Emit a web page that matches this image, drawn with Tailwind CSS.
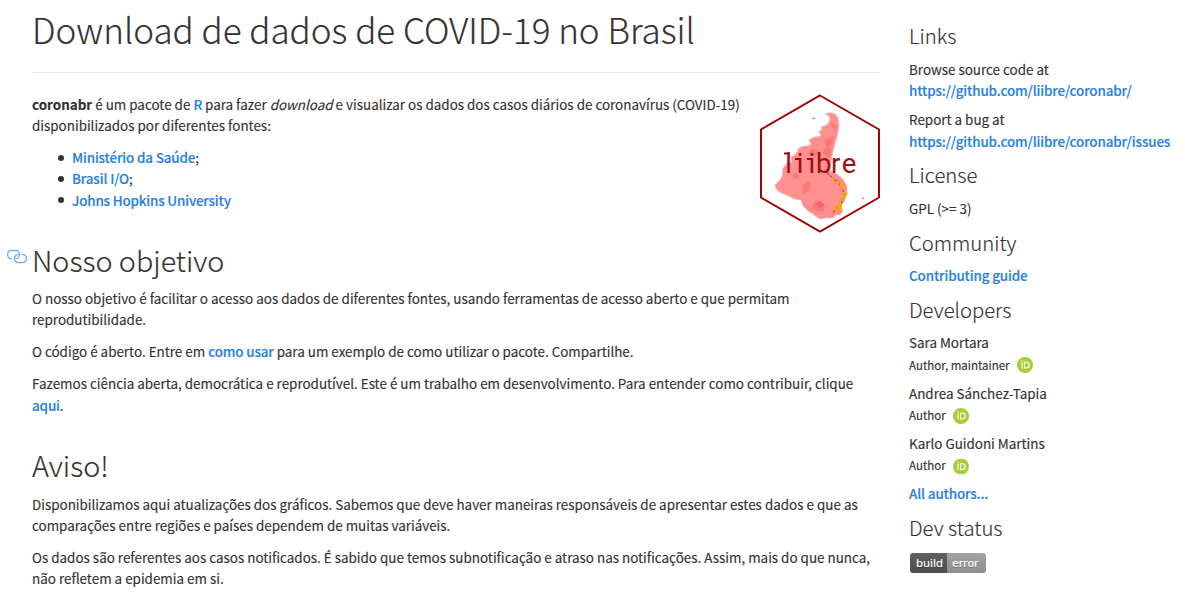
<!DOCTYPE html>
<html lang="pt-BR">
<head>
<meta charset="utf-8">
<title>coronabr</title>
<script src="https://cdn.jsdelivr.net/npm/@tailwindcss/browser@4"></script>
</head>
<body class="bg-white text-[#333] font-['Noto_Sans_CJK_SC','Noto_Sans',sans-serif] text-[13.43px] leading-[21.43px] overflow-hidden h-[603px] [-webkit-text-stroke:0.15px_currentColor]">
<div class="flex gap-[29px] pl-8">
  <main class="w-[848px] shrink-0">
    <header class="h-[73px] border-b border-[#e6e6e6] pt-[7px]">
      <h1 class="text-[35.02px] leading-[43px] font-light whitespace-nowrap">Download de dados de COVID-19 no Brasil</h1>
    </header>
    <section class="flex justify-between pt-[21px] h-[168px]">
      <div class="whitespace-nowrap">
        <p><b>coronabr</b> é um pacote de <a class="text-[#2780e3] font-medium tracking-[-0.14px]">R</a> para fazer <i>download</i> e visualizar os dados dos casos diários de coronavírus (COVID-19)<br>disponibilizados por diferentes fontes:</p>
        <ul class="mt-[10px]">
          <li class="flex items-center pl-[26px]"><span class="w-[6px] h-[6px] rounded-full bg-[#333] mr-2"></span><a class="text-[#2780e3] font-medium tracking-[-0.16px]">Ministério da Saúde</a>;</li>
          <li class="flex items-center pl-[26px]"><span class="w-[6px] h-[6px] rounded-full bg-[#333] mr-2"></span><a class="text-[#2780e3] font-medium tracking-[-0.14px]">Brasil I/O</a>;</li>
          <li class="flex items-center pl-[26px]"><span class="w-[6px] h-[6px] rounded-full bg-[#333] mr-2"></span><a class="text-[#2780e3] font-medium tracking-[-0.18px]">Johns Hopkins University</a></li>
        </ul>
      </div>
      <svg class="w-[120px] h-[139px] shrink-0" viewBox="0 0 120 139">
        <path d="M60 1.5 119 35.5V103.500L60 137.500 1 103.500V35.500Z" fill="#fff" stroke="#a10508" stroke-width="2"/>
        <path d="M65 20 70 18.500 75 20 78 24 79 33 77 43 74 53 72 63 70 77 77 80 83 85 87 92 87 99 85 106 81 112 83 117 80 121 76 121 73 124 66 124 60 125 54 121 48 117 43 112 41 106 34 105 29 102 21 99 16 95 15 91 19 87 22 83 23 74 27 69 32 68 31 63 36 60 39 54 44 52 48 52 51 50 49 46 54 43 58 43 61 41 59 37 62 36 61 33 67 31 70 26 69 22Z" fill="#ff9090" stroke="#ffb9b9" stroke-width=".7"/>
        <g fill="#f97878"><path d="M68 44 74 42 72 51 68 54 64 48ZM66 53 71 54 70 64 65 61 62 59ZM52 54 59 57 56 63 48 60ZM43 91 48 86 51 90 49 97 43 100 42 95ZM53 110 59 106 65 110 64 117 58 118 52 114ZM32 80 37 79 40 83 34 85ZM72 29 77 32 75 36 71 32ZM73 84 79 87 80 92 74 89ZM51 24 56 23.500 54 25.500ZM101 104 104 103.500 104 105.500Z"/></g>
        <path d="M55 110 60 107 64 111 60 114Z" fill="#ed666b"/>
        <path d="M69 70 68 80 73 84 79 89 84 98 83 107 78 112 73 119" fill="none" stroke="#c9506a" stroke-width="1.500" stroke-dasharray="3 1"/>
        <path d="M71.500 85 74 86M75 89 79 88M81 89 82 93 84 94M84 98 86 100 83 104 81 103M80 107 79 112 76 112M81 111 79 117M74 114 77 117" fill="none" stroke="#f3a90f" stroke-width="3"/>
        <text x="25.200 36.800 48.500 56 71 81.700" y="78.800" class="font-[Roboto,sans-serif] [-webkit-text-stroke:0]" font-size="27.500" fill="#a10c12">liibre</text>
        <path d="M24 59.500H29M35 65H40M47 65H52" stroke="#a10c12" stroke-width="2"/>
      </svg>
    </section>
    <section class="h-[205px]">
      <div class="flex -ml-[26px] h-[38px]">
        <svg class="w-[22px] h-[16px] mt-[8px] mr-1 shrink-0" viewBox="0 0 22 16" fill="none" stroke="#7fb3e8" stroke-width="1.400" stroke-linecap="round"><path d="M5.500 9.700C3.200 9.500 1.600 7.800 1.600 5.500S3.200 1.500 5.500 1.500H9.500C11.800 1.500 13.500 3.200 13.500 5.500S11.800 9.500 10 9.700M16.200 5.500C18.800 5.500 20.400 7.200 20.400 9.500S18.800 13.500 16.500 13.500H12.500C10.200 13.500 8.500 11.800 8.500 9.500S10.200 5.700 12 5.500"/></svg>
        <h2 class="text-[28.75px] leading-[38px] font-light whitespace-nowrap">Nosso objetivo</h2>
      </div>
      <div class="mt-[9px] whitespace-nowrap flex flex-col gap-[10.5px]">
        <p>O nosso objetivo é facilitar o acesso aos dados de diferentes fontes, usando ferramentas de acesso aberto e que permitam<br>reprodutibilidade.</p>
        <p>O código é aberto. Entre em <a class="text-[#2780e3] font-medium tracking-[-0.14px]">como usar</a> para um exemplo de como utilizar o pacote. Compartilhe.</p>
        <p>Fazemos ciência aberta, democrática e reprodutível. Este é um trabalho em desenvolvimento. Para entender como contribuir, clique<br><a class="text-[#2780e3] font-medium tracking-[-0.14px]">aqui</a>.</p>
      </div>
    </section>
    <section>
      <h2 class="text-[28.75px] leading-[38px] font-light whitespace-nowrap">Aviso!</h2>
      <div class="mt-[9.500px] whitespace-nowrap flex flex-col gap-[10.5px]">
        <p>Disponibilizamos aqui atualizações dos gráficos. Sabemos que deve haver maneiras responsáveis de apresentar estes dados e que as<br>comparações entre regiões e países dependem de muitas variáveis.</p>
        <p>Os dados são referentes aos casos notificados. É sabido que temos subnotificação e atraso nas notificações. Assim, mais do que nunca,<br>não refletem a epidemia em si.</p>
      </div>
    </section>
  </main>
  <aside class="w-[276px] shrink-0 whitespace-nowrap pt-[23px]">
    <h2 class="text-[20.25px] leading-[26px] font-light">Links</h2>
    <p class="mt-[10px]">Browse source code at<br><a class="text-[#2780e3] font-medium tracking-[-0.14px]">https://github.com/liibre/coronabr/</a></p>
    <p class="mt-[7.5px]">Report a bug at<br><a class="text-[#2780e3] font-medium tracking-[-0.14px]">https://github.com/liibre/coronabr/issues</a></p>
    <h2 class="mt-[10px] text-[20.25px] leading-[26px] font-light">License</h2>
    <p class="mt-[10px]">GPL (&gt;= 3)</p>
    <h2 class="mt-[10px] text-[20.25px] leading-[26px] font-light">Community</h2>
    <p class="mt-[9px]"><a class="text-[#2780e3] font-medium tracking-[-0.14px]">Contributing guide</a></p>
    <h2 class="mt-[11px] text-[20.25px] leading-[26px] font-light">Developers</h2>
    <ul class="mt-[9px] flex flex-col gap-[7.500px]">
      <li>Sara Mortara<div class="flex items-center gap-[7px] text-[11.5px]"><span class="translate-y-px">Author, maintainer</span><svg class="w-4 h-4 translate-y-px" viewBox="0 0 16 16"><circle cx="8" cy="8" r="8" fill="#a6ce39"/><path d="M5 5.500V11.500M7.500 5.300V11H9.200C11 11 12.200 9.800 12.200 8.100S11 5.300 9.200 5.300Z" fill="none" stroke="#fff" stroke-width="1.100"/><circle cx="5" cy="4" r=".7" fill="#fff"/></svg></div></li>
      <li>Andrea Sánchez-Tapia<div class="flex items-center gap-[7px] text-[11.5px]"><span class="translate-y-px">Author</span><svg class="w-4 h-4 translate-y-px" viewBox="0 0 16 16"><circle cx="8" cy="8" r="8" fill="#a6ce39"/><path d="M5 5.500V11.500M7.500 5.300V11H9.200C11 11 12.200 9.800 12.200 8.100S11 5.300 9.200 5.300Z" fill="none" stroke="#fff" stroke-width="1.100"/><circle cx="5" cy="4" r=".7" fill="#fff"/></svg></div></li>
      <li>Karlo Guidoni Martins<div class="flex items-center gap-[7px] text-[11.5px]"><span class="translate-y-px">Author</span><svg class="w-4 h-4 translate-y-[1.500px]" viewBox="0 0 16 16"><circle cx="8" cy="8" r="8" fill="#a6ce39"/><path d="M5 5.500V11.500M7.500 5.300V11H9.200C11 11 12.200 9.800 12.200 8.100S11 5.300 9.200 5.300Z" fill="none" stroke="#fff" stroke-width="1.100"/><circle cx="5" cy="4" r=".7" fill="#fff"/></svg></div></li>
      <li><a class="text-[#2780e3] font-medium tracking-[-0.14px]">All authors...</a></li>
    </ul>
    <h2 class="mt-[10px] text-[20.25px] leading-[26px] font-light">Dev status</h2>
    <div class="mt-[12px] ml-px flex w-[76px] h-5 rounded-[3px] overflow-hidden text-white font-['DejaVu_Sans',sans-serif] text-[11px] leading-[21px] [text-shadow:0_1px_0_rgba(1,1,1,0.3)]">
      <span class="w-[37px] pl-[6px] bg-linear-to-b from-[#606060] to-[#4c4c4c]">build</span>
      <span class="w-[39px] pl-[5px] bg-linear-to-b from-[#a4a4a4] to-[#8e8e8e]">error</span>
    </div>
  </aside>
</div>
</body>
</html>
